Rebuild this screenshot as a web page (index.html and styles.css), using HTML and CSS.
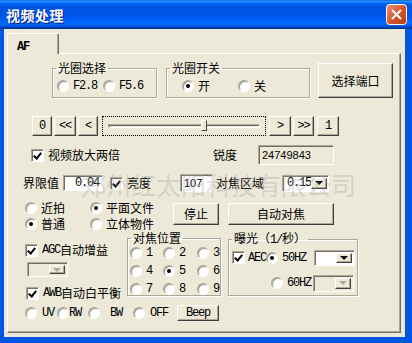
FILE: index.html
```html
<!DOCTYPE html>
<html lang="zh">
<head>
<meta charset="utf-8">
<title>视频处理</title>
<link rel="stylesheet" href="styles.css">
</head>
<body>
<div class="window">
  <div class="titlebar">
    <span class="title">视频处理</span>
    <span class="close">
      <svg width="21" height="21" viewBox="0 0 21 21"><defs><linearGradient id="cg" x1="0" y1="0" x2="1" y2="1"><stop offset="0" stop-color="#ee9a7c"/><stop offset="0.5" stop-color="#d8562e"/><stop offset="1" stop-color="#b63b14"/></linearGradient></defs><rect x="0.5" y="0.5" width="20" height="20" rx="3" fill="url(#cg)" stroke="#fff"/><path d="M6 6 L15 15 M15 6 L6 15" stroke="#fff" stroke-width="2"/></svg>
    </span>
  </div>
  <div class="client">
    <div class="tabs"><div class="tab"><span class="lat">AF</span></div></div>
    <div class="panel">
      <div class="row row-a">
        <fieldset class="group g-iris">
          <legend>光圈选择</legend>
          <div class="gbody">
            <label class="radio w46"><span class="rb"></span><span class="lat">F2.8</span></label>
            <label class="radio"><span class="rb"></span><span class="lat">F5.6</span></label>
          </div>
        </fieldset>
        <fieldset class="group g-switch">
          <legend>光圈开关</legend>
          <div class="gbody">
            <label class="radio w56"><span class="rb on"></span>开</label>
            <label class="radio"><span class="rb"></span>关</label>
          </div>
        </fieldset>
        <button class="btn btn-port">选择端口</button>
      </div>

      <div class="row row-b">
        <button class="btn sb b0"><span class="lat">0</span></button>
        <button class="btn sb b1"><span class="lat">&lt;&lt;</span></button>
        <button class="btn sb b2"><span class="lat">&lt;</span></button>
        <div class="slider"><div class="track"></div><div class="thumb"></div></div>
        <button class="btn sb b3"><span class="lat">&gt;</span></button>
        <button class="btn sb b4"><span class="lat">&gt;&gt;</span></button>
        <button class="btn sb b5"><span class="lat">1</span></button>
      </div>

      <div class="row row-c">
        <label class="check w-zoom"><span class="cb on"></span>视频放大两倍</label>
        <span class="lbl w-sharp">锐度</span>
        <span class="edit ro e-sharp">24749843</span>
      </div>

      <div class="row row-d">
        <span class="lbl w-limit">界限值</span>
        <span class="edit e-limit">0.04</span>
        <label class="check w-bright"><span class="cb on"></span>亮度</label>
        <span class="edit e-bright">107</span>
        <span class="lbl w-area">对焦区域</span>
        <span class="combo c-area"><span class="cval">0.15</span><span class="cbtn"></span></span>
      </div>

      <div class="row row-e">
        <div class="rgrid">
          <label class="radio"><span class="rb"></span>近拍</label>
          <label class="radio"><span class="rb on"></span>平面文件</label>
          <label class="radio"><span class="rb on"></span>普通</label>
          <label class="radio"><span class="rb"></span>立体物件</label>
        </div>
        <button class="btn btn-stop">停止</button>
        <button class="btn btn-auto">自动对焦</button>
      </div>

      <div class="row row-f">
        <div class="leftcol">
          <label class="check c-agc"><span class="cb on"></span><span class="lat">AGC</span>自动增益</label>
          <span class="combo c-gain dis"><span class="cval"></span><span class="cbtn"></span></span>
          <label class="check c-awb"><span class="cb on"></span><span class="lat">AWB</span>自动白平衡</label>
        </div>
        <fieldset class="group g-pos">
          <legend>对焦位置</legend>
          <div class="pgrid">
            <label class="radio"><span class="rb"></span><span class="lat">1</span></label>
            <label class="radio"><span class="rb"></span><span class="lat">2</span></label>
            <label class="radio"><span class="rb"></span><span class="lat">3</span></label>
            <label class="radio"><span class="rb"></span><span class="lat">4</span></label>
            <label class="radio"><span class="rb on"></span><span class="lat">5</span></label>
            <label class="radio"><span class="rb"></span><span class="lat">6</span></label>
            <label class="radio"><span class="rb"></span><span class="lat">7</span></label>
            <label class="radio"><span class="rb"></span><span class="lat">8</span></label>
            <label class="radio"><span class="rb"></span><span class="lat">9</span></label>
          </div>
        </fieldset>
        <fieldset class="group g-exp">
          <legend>曝光（<span class="lat">1/</span>秒）</legend>
          <div class="ebody">
            <div class="erow1">
              <label class="check"><span class="cb on"></span><span class="lat">AEC</span></label>
              <label class="radio r50"><span class="rb on"></span><span class="lat">50HZ</span></label>
              <span class="combo c-hz"><span class="cval"></span><span class="cbtn"></span></span>
            </div>
            <div class="erow2">
              <label class="radio r60"><span class="rb"></span><span class="lat">60HZ</span></label>
              <span class="combo c-hz2 dis"><span class="cval"></span><span class="cbtn"></span></span>
            </div>
          </div>
        </fieldset>
      </div>

      <div class="row row-g">
        <label class="radio w-uv"><span class="rb"></span><span class="lat">UV</span></label>
        <label class="radio w-rw"><span class="rb"></span><span class="lat">RW</span></label>
        <label class="radio w-bw"><span class="rb"></span><span class="lat">BW</span></label>
        <label class="radio w-off"><span class="rb"></span><span class="lat">OFF</span></label>
        <button class="btn btn-beep"><span class="lat">Beep</span></button>
      </div>

      <div class="watermark">郑州红太阳科技有限公司</div>
    </div>
  </div>
</div>
</body>
</html>
```

FILE: styles.css
```css
* { box-sizing: border-box; }
html, body { margin: 0; padding: 0; }
body {
  width: 412px; height: 343px; overflow: hidden; background: #fff;
  font: 12px/14px "Noto Sans CJK SC", sans-serif; color: #000;
}
.lat { font-family: "Liberation Mono", monospace; letter-spacing: -1.2px; }

.window { width: 412px; height: 343px; display: flex; flex-direction: column; }

.titlebar {
  height: 29px; flex: none; display: flex; align-items: center; justify-content: space-between;
  padding: 0 5px 0 6px;
  background: linear-gradient(to bottom, #0058ee 0%, #3593ff 4%, #288eff 6%, #127dff 8%, #036ffc 10%, #0262ee 14%, #0057e5 20%, #0054e3 24%, #0055eb 56%, #005bf5 66%, #026afe 76%, #0062ef 86%, #0052d6 92%, #0040ab 94%, #003092 100%);
}
.title { color: #fff; font-weight: 700; font-size: 14px; text-shadow: 1px 1px #0a1883; letter-spacing: 0.5px; }
.close { width: 21px; height: 21px; display: block; }
.close svg { display: block; }

.client {
  flex: 1; background: #ece9d8; display: flex; flex-direction: column;
  border-left: 4px solid #0055e5; border-right: 7px solid #0055e5; border-bottom: 6px solid #0055e5;
  padding: 4px 0 0 3px;
}
.tabs { height: 20px; display: flex; }
.tab {
  width: 52px; height: 21px; padding: 4px 0 0 9px; font-weight: 700;
  border-top: 1px solid #fff; border-left: 1px solid #fff; border-right: 1px solid #716f64;
  box-shadow: inset -1px 0 #aca899; border-radius: 2px 2px 0 0; background: #ece9d8; position: relative; z-index: 1;
}
.panel {
  position: relative; width: 394px; height: 280px;
  border: 1px solid; border-color: #fff #716f64 #716f64 #fff; box-shadow: inset -1px -1px #aca899;
  display: flex; flex-direction: column;
}
.row { display: flex; flex: none; }

/* controls */
.btn {
  font: inherit; color: #000; background: #ece9d8; padding: 0; margin: 0;
  border: 1px solid; border-color: #fff #404040 #404040 #fff; box-shadow: inset -1px -1px #aca899;
  display: flex; align-items: center; justify-content: center;
}
.radio, .check { display: flex; align-items: center; white-space: nowrap; }
.rb {
  width: 12px; height: 12px; border-radius: 50%; flex: none; margin-right: 4px; position: relative;
  background: radial-gradient(circle at 60% 60%, #fff 0 45%, #ecebe4 100%); border: 1px solid; border-color: #aca899 #fff #fff #aca899;
  box-shadow: inset 1px 1px #9d9a8c;
}
.rb.on::after {
  content: ""; position: absolute; left: 3px; top: 3px; width: 4px; height: 4px; border-radius: 50%; background: #000;
}
.cb {
  width: 13px; height: 13px; flex: none; margin-right: 4px; position: relative;
  background: #fff; border: 1px solid; border-color: #aca899 #fff #fff #aca899;
  box-shadow: inset 1px 1px #716f64;
}
.cb.on::after {
  content: ""; position: absolute; left: 3px; top: 1px; width: 3px; height: 6px;
  border: solid #000; border-width: 0 2px 2px 0; transform: rotate(40deg);
}
.edit {
  display: flex; align-items: center; background: #fff; padding: 0 3px;
  border: 1px solid; border-color: #aca899 #fff #fff #aca899; box-shadow: inset 1px 1px #716f64;
  font-family: "Liberation Sans", sans-serif; font-size: 11px;
}
.edit.ro { background: #ece9d8; }
.combo {
  display: flex; background: #fff; padding: 2px;
  border: 1px solid; border-color: #aca899 #fff #fff #aca899; box-shadow: inset 1px 1px #716f64;
}
.cval { flex: 1; display: flex; align-items: center; padding-left: 2px; font-family: "Liberation Mono", monospace; letter-spacing: -1.2px; }
.cbtn {
  width: 16px; flex: none; position: relative; background: #ece9d8;
  border: 1px solid; border-color: #fff #404040 #404040 #fff; box-shadow: inset -1px -1px #aca899;
}
.cbtn::after {
  content: ""; position: absolute; left: 3px; top: 50%; margin-top: -2px;
  border-left: 4px solid transparent; border-right: 4px solid transparent; border-top: 4px solid #000;
}
.combo.dis { background: #ece9d8; }
.combo.dis .cbtn::after { border-top-color: #aca899; }

.group {
  margin: 0; padding: 0; min-width: 0; border: 1px solid #aca899;
  box-shadow: inset 1px 1px #fff, 1px 1px #fff;
}
.group legend { padding: 0 2px; margin-left: 3px; line-height: 12px; }

/* row A */
.row-a { margin-top: 8px; height: 36px; align-items: flex-start; }
.g-iris { margin-left: 44px; width: 105px; height: 36px; }
.g-switch { margin-left: 9px; width: 144px; height: 36px; }
.gbody { height: 23px; display: flex; align-items: center; }
.g-iris .gbody { padding-left: 4px; }
.g-switch .gbody { padding-left: 15px; }
.w46 { width: 46px; }
.w56 { width: 56px; }
.btn-port { margin-left: 8px; margin-top: 1px; width: 75px; height: 35px; }

/* row B */
.row-b { margin-top: 18px; height: 20px; }
.sb { height: 20px; }
.b0 { margin-left: 24px; width: 20px; }
.b1 { margin-left: 2px; width: 22px; }
.b2 { margin-left: 2px; width: 20px; }
.b3 { margin-left: 3px; width: 22px; }
.b4 { margin-left: 2px; width: 21px; }
.b5 { margin-left: 3px; width: 22px; }
.slider { margin-left: 4px; width: 164px; height: 20px; border: 1px dotted #000; position: relative; display: flex; align-items: center; padding: 0 5px; }
.track { flex: 1; height: 4px; border: 1px solid; border-color: #aca899 #fff #fff #aca899; box-shadow: inset 1px 1px #716f64; }
.thumb {
  position: absolute; left: 98px; top: 3px; width: 6px; height: 11px; background: #ece9d8;
  border: 1px solid; border-color: #fff #404040 #404040 #fff;
}

/* row C */
.row-c { margin-top: 9px; height: 20px; align-items: center; }
.w-zoom { margin-left: 23px; width: 182px; }
.w-sharp { width: 45px; }
.e-sharp { width: 76px; height: 20px; }

/* row D */
.row-d { margin-top: 9px; height: 18px; align-items: center; }
.w-limit { margin-left: 15px; width: 40px; }
.e-limit { width: 40px; height: 16px; justify-content: flex-end; font-family: "Liberation Mono", monospace; font-size: 12px; letter-spacing: -1.2px; }
.w-bright { margin-left: 7px; width: 70px; }
.e-bright { width: 33px; height: 18px; }
.w-area { margin-left: 3px; width: 66px; }
.c-area { width: 47px; height: 17px; }

/* row E */
.row-e { margin-top: 11px; height: 29px; }
.rgrid { margin-left: 17px; width: 148px; display: grid; grid-template-columns: 65px 83px; grid-auto-rows: 16px; margin-top: -3px; }
.btn-stop { width: 46px; height: 22px; }
.btn-auto { margin-left: 9px; width: 106px; height: 22px; }

/* row F */
.row-f { height: 68px; }
.leftcol { width: 119px; display: flex; flex-direction: column; align-items: flex-start; }
.c-agc { margin: 11px 0 0 17px; height: 14px; }
.c-gain { margin: 5px 0 0 19px; width: 41px; height: 17px; }
.c-awb { margin: 9px 0 0 18px; height: 14px; }
.g-pos { width: 94px; height: 64px; }
.pgrid { display: grid; grid-template-columns: 33px 34px 24px; grid-auto-rows: 18px; padding: 0 0 0 2px; margin-top: 0; }
.g-exp { margin-left: 7px; width: 130px; height: 64px; }
.ebody { padding-left: 3px; }
.erow1 { display: flex; align-items: center; height: 17px; margin-top: 3px; }
.erow1 .cb { margin-right: 3px; }
.r50 { margin-left: 0; width: 48px; }
.c-hz { width: 41px; height: 16px; }
.erow2 { display: flex; align-items: center; height: 18px; margin-top: 8px; padding-left: 39px; }
.r60 { width: 42px; }
.c-hz2 { width: 41px; height: 17px; }

/* row G */
.row-g { margin-top: 5px; height: 16px; align-items: center; }
.w-uv { margin-left: 17px; width: 32px; }
.w-uv .rb { margin-right: 5px; }
.w-rw { width: 31px; }
.w-rw .rb { margin-right: 0; }
.w-bw { width: 45px; }
.w-bw .rb { margin-right: 10px; }
.w-off { width: 44px; }
.w-off .rb { margin-right: 5px; }
.btn-beep { width: 42px; height: 16px; }

.watermark {
  position: absolute; left: 73px; top: 116px; font-size: 25px; line-height: 28px; letter-spacing: 0;
  color: rgba(170, 170, 170, 0.4); pointer-events: none; white-space: nowrap;
}
```
